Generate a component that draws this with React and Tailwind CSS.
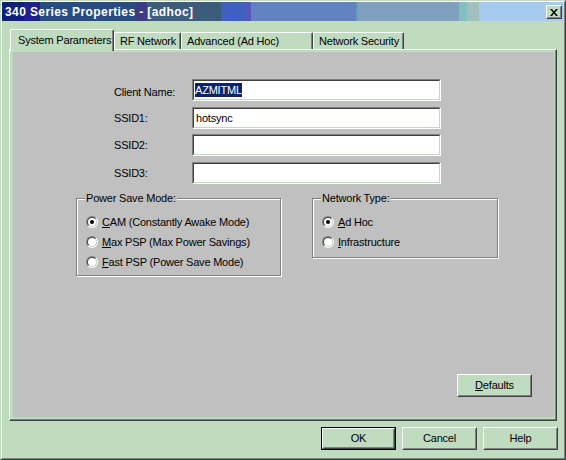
import React from "react";

const titleBg =
  "bg-[linear-gradient(90deg,#102078_0px,#102078_22px,#20208a_22px,#20208a_38px,#284c80_38px,#284c80_133px,#3c3c82_133px,#3c3c82_145px,#3c5c7c_145px,#3c5c7c_219px,#4060c0_219px,#4060c0_244px,#5858bc_244px,#5858bc_249px,#6282c0_249px,#6282c0_354px,#5ca0c8_354px,#5ca0c8_356px,#80a0c0_356px,#80a0c0_457px,#80c0c0_457px,#80c0c0_465px,#a0c0c0_465px,#a0c0c0_477px,#a6caf0_477px,#a6caf0_100%)]";

const Raised = ({ children, className = "", isDefault = false }) => {
  const inner = (
    <div className="h-full border border-t-white border-l-white border-r-[#404040] border-b-[#404040]">
      <div className="h-full flex items-center justify-center border border-t-[#c0dcc0] border-l-[#c0dcc0] border-r-[#808080] border-b-[#808080] bg-[#c0dcc0]">
        {children}
      </div>
    </div>
  );
  if (isDefault) {
    return <div className={`border border-black ${className}`}>{inner}</div>;
  }
  return <div className={className}>{inner}</div>;
};

const TextBox = ({ children }) => (
  <div className="w-[249px] h-[22px] border border-t-[#808080] border-l-[#808080] border-r-white border-b-white">
    <div className="h-full border border-t-[#404040] border-l-[#404040] border-r-[#c0dcc0] border-b-[#c0dcc0] bg-white flex items-center pl-[1px]">
      {children}
    </div>
  </div>
);

const Radio = ({ checked, children }) => (
  <div className="h-[20px] flex items-center">
    <div className="ml-[9px] w-[12px] h-[12px] rounded-full border border-t-[#808080] border-l-[#808080] border-r-white border-b-white">
      <div className="w-full h-full rounded-full border border-t-[#404040] border-l-[#404040] border-r-[#c0dcc0] border-b-[#c0dcc0] bg-white flex items-center justify-center">
        {checked && <div className="w-[4px] h-[4px] rounded-full bg-black" />}
      </div>
    </div>
    <span className="ml-[4px]">{children}</span>
  </div>
);

const Group = ({ label, className, children }) => (
  <div className={`relative border border-[#808080] shadow-[inset_1px_1px_0_#fff,1px_1px_0_#fff] ${className}`}>
    <span className="absolute -top-[8px] left-[8px] bg-[#c0c0c0] px-[1px] leading-[14px]">{label}</span>
    <div className="pt-[13px]">{children}</div>
  </div>
);

const Field = ({ label, children, className = "" }) => (
  <div className={`flex items-center ${className}`}>
    <span className="w-[78px]">{label}</span>
    <TextBox>{children}</TextBox>
  </div>
);

const Tab = ({ label, width, selected }) => (
  <div
    className={`${width} flex items-center rounded-t-[2px] border-t border-l border-white border-r border-r-[#404040] shadow-[inset_-1px_0_0_#808080] bg-[#c0dcc0] ${
      selected ? "h-[22px] pl-[7px] -mb-[2px] relative z-10" : "h-[17px] pl-[5px]"
    }`}
  >
    {label}
  </div>
);

export default function App() {
  return (
    <div className="w-[566px] h-[460px] bg-[#c0dcc0] border border-t-[#c0dcc0] border-l-[#c0dcc0] border-r-[#404040] border-b-[#404040] font-['Liberation_Sans',Arial,sans-serif] text-[11px] tracking-[-0.2px] text-black select-none">
      <div className="h-full flex flex-col border border-t-white border-l-white border-r-[#808080] border-b-[#808080]">
        {/* title bar */}
        <div className={`h-[19px] mr-[1px] flex items-center justify-between ${titleBg}`}>
          <span className="pl-[3px] text-white font-bold text-[12px] tracking-[0.4px]">
            340 Series Properties - [adhoc]
          </span>
          <Raised className="w-[16px] h-[14px] mr-[1px] mt-px">
            <svg width="8" height="7" viewBox="0 0 8 7">
              <path d="M0 0H2L4 2.4L6 0H8L5 3.5L8 7H6L4 4.6L2 7H0L3 3.5Z" fill="black" />
            </svg>
          </Raised>
        </div>

        {/* tabs */}
        <div className="mt-[8px] ml-[8px] h-[20px] flex items-end">
          <Tab label="System Parameters" width="w-[104px]" selected />
          <Tab label="RF Network" width="w-[67px]" />
          <Tab label="Advanced (Ad Hoc)" width="w-[132px]" />
          <Tab label="Network Security" width="w-[91px]" />
        </div>

        {/* tab frame */}
        <div className="ml-[7px] w-[548px] h-[372px] border-t border-l border-white border-r border-b border-r-[#404040] border-b-[#404040] shadow-[inset_-1px_-1px_0_#808080] pl-[3px] pr-[2px] pt-[2px] pb-[3px]">
          <div className="h-full bg-[#c0c0c0] flex flex-col">
            <div className="pl-[101px] pt-[27px]">
              <Field label="Client Name:" className="[&>span]:pt-[5px]">
                <span className="bg-[#0a246a] text-white leading-[14px]">AZMITML</span>
              </Field>
              <Field label="SSID1:" className="mt-[6px]">
                <span className="pl-[1px]">hotsync</span>
              </Field>
              <Field label="SSID2:" className="mt-[5px]" />
              <Field label="SSID3:" className="mt-[6px]" />
            </div>

            <div className="flex items-start pl-[63px] mt-[14px] gap-[31px]">
              <Group label="Power Save Mode:" className="w-[205px] h-[78px]">
                <Radio checked>
                  <span className="underline">C</span>AM (Constantly Awake Mode)
                </Radio>
                <Radio>
                  <span className="underline">M</span>ax PSP (Max Power Savings)
                </Radio>
                <Radio>
                  <span className="underline">F</span>ast PSP (Power Save Mode)
                </Radio>
              </Group>
              <Group label="Network Type:" className="w-[186px] h-[60px]">
                <Radio checked>
                  <span className="underline">A</span>d Hoc
                </Radio>
                <Radio>
                  <span className="underline">I</span>nfrastructure
                </Radio>
              </Group>
            </div>

            <div className="mt-auto mb-[20px] mr-[22px] flex justify-end">
              <Raised className="w-[75px] h-[23px]">
                <span>
                  <span className="underline">D</span>efaults
                </span>
              </Raised>
            </div>
          </div>
        </div>

        {/* dialog buttons */}
        <div className="mt-[6px] pr-[6px] flex justify-end gap-[6px]">
          <Raised className="w-[75px] h-[23px]" isDefault>
            OK
          </Raised>
          <Raised className="w-[75px] h-[23px]">Cancel</Raised>
          <Raised className="w-[75px] h-[23px]">Help</Raised>
        </div>
      </div>
    </div>
  );
}
